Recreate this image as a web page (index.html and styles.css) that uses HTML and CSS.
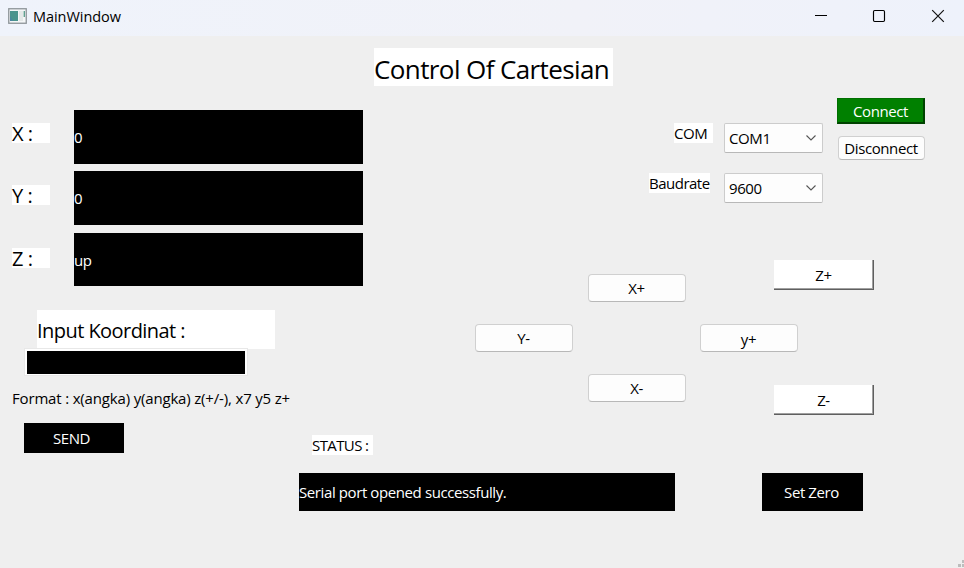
FILE: index.html
```html
<!DOCTYPE html>
<html lang="en">
<head>
<meta charset="utf-8">
<title>MainWindow</title>
<link rel="stylesheet" href="styles.css">
</head>
<body>
<div class="window">
  <header class="titlebar">
    <svg class="app-icon" width="19" height="16" viewBox="0 0 19 16"><rect x=".75" y=".75" width="17.5" height="14.5" fill="#f4f6f7" stroke="#8d9498" stroke-width="1.3"/><rect x="2" y="3" width="8" height="10" fill="#4b948d"/><path d="M2 13V8l3 5z" fill="#4a86a0"/><rect x="11" y="3" width="4" height="10" fill="#e4e8e8"/><path d="M16.300 3v6" stroke="#62a091" stroke-width="1.400"/></svg>
    <span class="caption">MainWindow</span>
    <div class="controls">
      <svg width="14" height="14" viewBox="0 0 14 14"><path d="M2 6.500h12" stroke="#000"/></svg>
      <svg width="14" height="14" viewBox="0 0 14 14"><rect x="1.500" y="1.500" width="11" height="11" rx="1.200" fill="none" stroke="#000" stroke-width="1.150"/></svg>
      <svg width="14" height="14" viewBox="0 0 14 14"><path d="M1.200 1.200l11.600 11.600M12.800 1.200L1.200 12.800" stroke="#111" stroke-width="1.200"/></svg>
    </div>
  </header>
  <main>
    <h1>Control Of Cartesian</h1>
    <div class="columns">
      <section class="left">
        <div class="readout x"><label>X :</label><output>0</output></div>
        <div class="readout y"><label>Y :</label><output>0</output></div>
        <div class="readout z"><label>Z :</label><output>up</output></div>
        <div class="input-label">Input Koordinat :</div>
        <div class="line-edit"></div>
        <p class="format">Format : x(angka) y(angka) z(+/-), x7 y5 z+</p>
        <button class="dark send">SEND</button>
      </section>
      <section class="right">
        <div class="connection">
          <div class="ports">
            <div class="port"><label class="com">COM</label><div class="combo"><span>COM1</span><svg width="12" height="8" viewBox="0 0 12 8"><path d="M1.500 1.500L6 6l4.500-4.500" fill="none" stroke="#555" stroke-width="1.100"/></svg></div></div>
            <div class="port"><label class="baud">Baudrate</label><div class="combo"><span>9600</span><svg width="12" height="8" viewBox="0 0 12 8"><path d="M1.500 1.500L6 6l4.500-4.500" fill="none" stroke="#555" stroke-width="1.100"/></svg></div></div>
          </div>
          <div class="links">
            <button class="connect">Connect</button>
            <button class="soft disconnect">Disconnect</button>
          </div>
        </div>
        <div class="jog">
          <button class="soft xp">X+</button>
          <button class="soft ym">Y-</button>
          <button class="soft yp">y+</button>
          <button class="soft xm">X-</button>
          <button class="raised zp">Z+</button>
          <button class="raised zm">Z-</button>
        </div>
        <div class="status-label">STATUS :</div>
        <div class="status-row">
          <output class="status">Serial port opened successfully.</output>
          <button class="dark zero">Set Zero</button>
        </div>
      </section>
    </div>
    <svg class="grip" width="6" height="8" viewBox="0 0 6 8"><path d="M4 0h2v3H4zM0 4h3v3H0zM4 4h2v3H4z" fill="#bdbdbd"/></svg>
  </main>
</div>
</body>
</html>
```

FILE: styles.css
```css
* { box-sizing: border-box; }
body {
  margin: 0;
  font: 15px/20px "Open Sans", "Noto Sans", sans-serif;
  color: #000;
  letter-spacing: -0.4px;
}
button {
  font: inherit;
  letter-spacing: inherit;
  color: #000;
  padding: 0;
  margin: 0;
  border: 0;
  display: flex;
  align-items: center;
  justify-content: center;
  white-space: nowrap;
}
span, label, output { white-space: nowrap; }
.window { width: 964px; height: 568px; overflow: hidden; background: #efefef; }
.titlebar {
  height: 36px;
  padding: 0 19px 4px 8px;
  display: flex;
  align-items: center;
  background: linear-gradient(90deg, #eff3fb, #f1f2f8 60%, #eef2fb);
}
.caption { margin-left: 6px; padding-top: 2px; font-size: 14.5px; letter-spacing: -0.05px; }
.controls { margin-left: auto; display: flex; gap: 45px; }
main { position: relative; height: 532px; padding-top: 12px; }
h1 {
  margin: 0 0 0 374px;
  width: 239px;
  height: 38px;
  padding-top: 2px;
  background: #fff;
  font-size: 26px;
  font-weight: 400;
  line-height: 38px;
  letter-spacing: -0.6px;
  white-space: nowrap;
}
.columns { display: flex; }
.left { width: 375px; padding-top: 24px; }
.right { width: 589px; padding-top: 12px; }

.readout { display: flex; padding-left: 12px; gap: 24px; height: 54px; margin-bottom: 7px; }
.readout label { width: 38px; height: 20px; margin-top: 13px; background: #fff; font-size: 20px; line-height: 22px; letter-spacing: -0.5px; }
.readout output { width: 289px; background: #000; color: #fff; line-height: 55px; }
.readout.y { margin-bottom: 8px; }
.readout.y label { margin-top: 14px; }
.readout.z { height: 53px; margin-bottom: 24px; }
.readout.z label { margin-top: 15px; }

.input-label { margin-left: 37px; width: 238px; height: 39px; background: #fff; font-size: 20px; line-height: 41px; letter-spacing: -0.55px; }
.line-edit {
  position: relative;
  margin: -1px 0 0 24px;
  width: 224px;
  height: 28px;
  background: #000;
  border: solid #fff;
  border-width: 3px 3px 2px;
  outline: 1px solid #e8e8e8;
  outline-offset: -1px;
}
.format { margin: 12px 0 15px 12px; letter-spacing: -0.17px; white-space: nowrap; }
.dark { background: #000; color: #fff; }
.send { margin-left: 24px; width: 100px; height: 30px; padding-right: 5px; }

.connection { display: flex; height: 105px; }
.ports { width: 448px; margin-right: 14px; padding-top: 25px; display: flex; flex-direction: column; gap: 20px; }
.port { display: flex; justify-content: flex-end; height: 30px; }
.port label { background: #fff; height: 20px; }
.com { width: 39px; margin-right: 11px; }
.baud { width: 61px; margin-right: 14px; letter-spacing: -0.5px; }
.combo {
  width: 99px;
  height: 30px;
  padding: 0 5px 0 4px;
  display: flex;
  align-items: center;
  justify-content: space-between;
  background: #fdfdfd;
  border: 1px solid #ccc;
  border-bottom-color: #b8b8b8;
  border-radius: 2px;
}
.links { display: flex; flex-direction: column; align-items: flex-end; gap: 12px; }
.connect { width: 88px; height: 26px; background: #008000; color: #fff; border: 1px solid #006f00; border-right: 2px solid #004300; border-bottom: 2px solid #004300; }
.soft { background: #fdfdfd; border: 1px solid #d0d0d0; border-bottom-color: #b8b8b8; border-radius: 4px; padding-right: 1px; }
.disconnect { width: 87px; height: 24px; }
.yp { padding: 2px 1px 0 0; }
.raised { background: #fff; border: 0 solid #5f5f5f; border-width: 0 1px 1px 0; box-shadow: inset -1px -1px #a0a0a0; padding-top: 1px; }

.jog {
  margin: 57px 0 0 100px;
  width: 399px;
  display: grid;
  grid-template-columns: 98px 15px 98px 14px 74px 24px 76px;
  grid-template-rows: 14px 16px 12px 22px 28px 22px 11px 17px 13px;
}
.xp { grid-area: 2 / 3 / 4 / 4; }
.ym { grid-area: 5 / 1 / 6 / 2; }
.yp { grid-area: 5 / 5 / 6 / 7; }
.xm { grid-area: 7 / 3 / 9 / 4; }
.zp { grid-area: 1 / 6 / 3 / 8; }
.zm { grid-area: 8 / 6 / 10 / 8; }

.status-label { margin: 20px 0 18px -63px; width: 61px; height: 20px; background: #fff; letter-spacing: -0.6px; }
.status-row { display: flex; gap: 87px; margin-left: -76px; }
.status { width: 376px; height: 38px; background: #000; color: #fff; line-height: 39px; }
.zero { width: 101px; height: 38px; padding-right: 2px; }
.grip { position: absolute; right: 0; bottom: 0; }
```
